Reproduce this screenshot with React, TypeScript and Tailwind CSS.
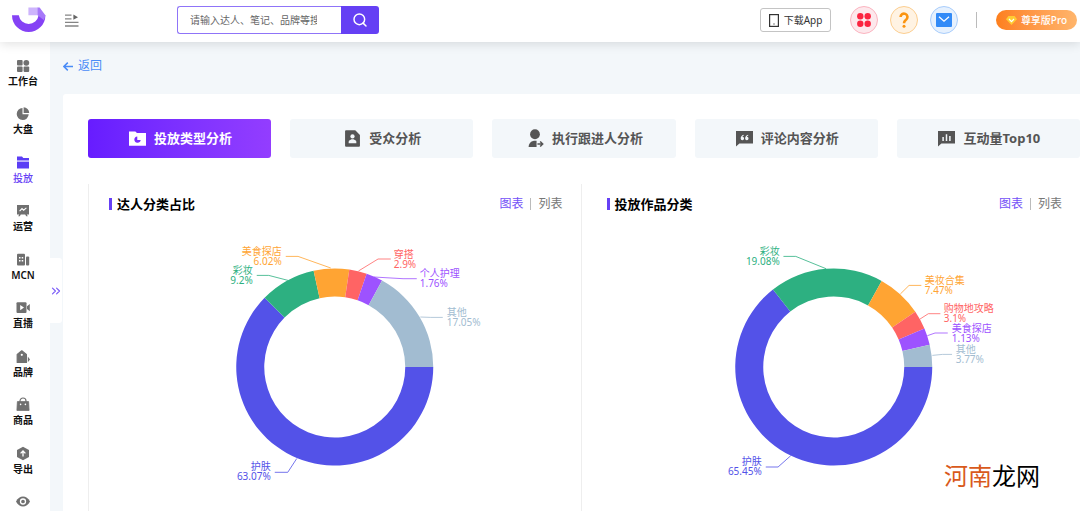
/**
 * Campaign analysis page: top bar, icon sidebar and two category donuts.
 */
import type { ReactNode } from 'react';
import { useState } from 'react';
import { ChevronsRight, Search } from 'lucide-react';

type Slice = {
  name: string;
  pct: string;
  color: string;
  // clockwise end angle in degrees, 0 = 3 o'clock
  end: number;
  side: 'left' | 'right';
  // label anchor and leader line, relative to the donut centre
  x: number;
  y: number;
  line: string;
};

const TALENT: Slice[] = [
  { name: '护肤', pct: '63.07%', color: '#5352e8', end: 224.6, side: 'left', x: -64, y: 105, line: '-60,105.3 -47,105.3 -38,91.5' },
  { name: '彩妆', pct: '9.2%', color: '#2db081', end: 257.6, side: 'left', x: -82, y: -91, line: '-78,-91.6 -66,-91.6 -46.7,-86.6' },
  { name: '美食探店', pct: '6.02%', color: '#ffa433', end: 278.5, side: 'left', x: -53, y: -110, line: '-49,-110.6 -36.7,-110.6 -4,-99' },
  { name: '穿搭', pct: '2.9%', color: '#ff6464', end: 288.9, side: 'right', x: 59, y: -107, line: '56,-108 43.3,-108 23.7,-96' },
  { name: '个人护理', pct: '1.76%', color: '#9d52ff', end: 298.7, side: 'right', x: 85, y: -88, line: '82,-88.3 68.3,-88.3 39,-90' },
  { name: '其他', pct: '17.05%', color: '#a2bcd1', end: 360, side: 'right', x: 112, y: -49, line: '108,-49.6 96,-49.6 85.6,-50' },
];

const WORKS: Slice[] = [
  { name: '护肤', pct: '65.45%', color: '#5352e8', end: 231.9, side: 'left', x: -72, y: 100, line: '-68,100 -55.7,100 -43,88.7' },
  { name: '彩妆', pct: '19.08%', color: '#2db081', end: 299.1, side: 'left', x: -54, y: -110, line: '-50.3,-110.6 -38,-110.6 -7.7,-98.3' },
  { name: '美妆合集', pct: '7.47%', color: '#ffa433', end: 325.9, side: 'right', x: 91, y: -81, line: '87.6,-81.6 75.3,-81.6 66.6,-73' },
  { name: '购物地攻略', pct: '3.1%', color: '#ff6464', end: 337, side: 'right', x: 110, y: -53, line: '106.6,-53.3 94.6,-53.3 86.3,-48' },
  { name: '美食探店', pct: '1.13%', color: '#9d52ff', end: 346.9, side: 'right', x: 118, y: -33, line: '114,-34 101.3,-34 93.6,-31.3' },
  { name: '其他', pct: '3.77%', color: '#a2bcd1', end: 360, side: 'right', x: 122, y: -12, line: '118.3,-12.6 108.6,-12.6 98.6,-11.6' },
];

const NAV: { label: string; icon: ReactNode }[] = [
  {
    label: '工作台',
    icon: (
      <>
        <rect x="1" y="2" width="5.6" height="5.6" rx="1" />
        <circle cx="10.3" cy="4.8" r="2.9" />
        <rect x="1" y="8.4" width="5.6" height="5.6" rx="1" />
        <rect x="7.6" y="8.4" width="5.6" height="5.6" rx="1" />
      </>
    ),
  },
  {
    label: '大盘',
    icon: (
      <>
        <path d="M6.5 2a6 6 0 1 0 6.2 6.3H6.5z" />
        <path d="M7.6 1.2a6 6 0 0 1 5.6 5.9H7.6z" />
      </>
    ),
  },
  {
    label: '投放',
    icon: (
      <>
        <path d="M1 1.6h5l1.3 1.3H13v2.6H1z" />
        <path d="M1 6.6h12v6.9H1z" />
      </>
    ),
  },
  {
    label: '运营',
    icon: (
      <>
        <path d="M1 2h12v9.4h-2.2l1 1.8h-1.6l-1-1.8H4.8l-1 1.8H2.2l1-1.8H1z" />
        <path d="M3.6 8.2 6 5.6l1.6 1.6 2.8-2.4" fill="none" stroke="#fff" strokeWidth="1.1" />
      </>
    ),
  },
  {
    label: 'MCN',
    icon: (
      <>
        <rect x="1" y="1.8" width="8" height="11.6" rx="1" />
        <rect x="10" y="4.6" width="3.2" height="8.8" rx="1" />
        <path d="M3 5h1.5v1.5H3zM5.7 5h1.5v1.5H5.7zM3 8h1.5v1.5H3zM5.7 8h1.5v1.5H5.7z" fill="#fff" />
      </>
    ),
  },
  {
    label: '直播',
    icon: (
      <>
        <rect x="0.5" y="2.2" width="10" height="10.8" rx="1" />
        <path d="M11 6.2 13.8 4v7.2L11 9z" />
        <path d="m4.2 5 3.8 2.6-3.8 2.6z" fill="#fff" />
      </>
    ),
  },
  {
    label: '品牌',
    icon: (
      <>
        <path d="M5.8 1.8 10.4 5.4v8H1.200v-8z" strokeLinejoin="round" stroke="currentColor" strokeWidth="1.2" />
        <path d="m11.8 7.4 2.2 3.200-2.2 2.600z" />
        <circle cx="5.8" cy="5.8" r="1.1" fill="#fff" />
      </>
    ),
  },
  {
    label: '商品',
    icon: (
      <>
        <path d="M1.4 4.6h11.2l.5 8.8H.9z" strokeLinejoin="round" stroke="currentColor" strokeWidth="0.8" />
        <path d="M4 5V4a3 3 0 0 1 6 0v1" fill="none" stroke="currentColor" strokeWidth="1.2" />
        <circle cx="4.6" cy="7.4" r="0.8" fill="#fff" />
        <circle cx="9.4" cy="7.4" r="0.8" fill="#fff" />
      </>
    ),
  },
  {
    label: '导出',
    icon: (
      <>
        <path d="m7 .8 6 3.3v6.8l-6 3.3-6-3.3V4.1z" />
        <path d="M7 10.6V5.4M4.6 7.4 7 5l2.4 2.4" fill="none" stroke="#fff" strokeWidth="1.3" />
      </>
    ),
  },
  {
    label: '',
    icon: (
      <>
        <path d="M0 7.5C3.4.9 10.6.9 14 7.5 10.6 14.1 3.4 14.1 0 7.5z" />
        <circle cx="7" cy="7.5" r="2.5" fill="none" stroke="#fff" strokeWidth="1.3" />
      </>
    ),
  },
];

const TABS: { label: string; icon: ReactNode }[] = [
  {
    label: '投放类型分析',
    icon: (
      <>
        <path d="M0 1.4h6l1.5 1.5H16v12H0z" fill="currentColor" />
        <path d="M7.8 6a3 3 0 1 0 3.2 3.4H7.8z" fill="#7a2bff" />
      </>
    ),
  },
  {
    label: '受众分析',
    icon: (
      <>
        <path d="M1 1.2Q1 .2 2 .2h8.6L15 4.6v10.2q0 1-1 1H2q-1 0-1-1z" fill="currentColor" />
        <circle cx="8" cy="6" r="2" fill="#f3f7fa" />
        <path d="M4.4 12.4V11q0-1 1-1.4l1.6-.8h2l1.6.8q1 .4 1 1.4v1.4z" fill="#f3f7fa" />
      </>
    ),
  },
  {
    label: '执行跟进人分析',
    icon: (
      <>
        <circle cx="7.5" cy="4" r="4.6" fill="currentColor" />
        <path d="M1.500 16q0-5 5-6h2.500v6z" fill="currentColor" />
        <path d="M9.8 13.2h5M12.4 10.8l2.4 2.4-2.4 2.4" fill="none" stroke="currentColor" strokeWidth="1.4" />
      </>
    ),
  },
  {
    label: '评论内容分析',
    icon: (
      <>
        <path d="M0 1h16v11.6H3.2L0 15.6z" fill="currentColor" />
        <path
          d="M7.2 4.4Q4.4 5.2 4.4 8a1.6 1.6 0 1 0 1.7-1.6q.1-.8 1.3-1.3zM11.4 4.4Q8.6 5.2 8.6 8a1.6 1.6 0 1 0 1.7-1.6q.1-.8 1.3-1.3z"
          fill="#f3f7fa"
        />
      </>
    ),
  },
  {
    label: '互动量Top10',
    icon: (
      <>
        <path d="M0 1h16v11.6H3.2L0 15.6z" fill="currentColor" />
        <path d="M4.8 6.6v3.8M8 4v6.4M11.2 5.6v4.8" stroke="#f3f7fa" strokeWidth="1.4" />
      </>
    ),
  },
];

const OUTER = 98.5;
const INNER = 70.5;

function point(r: number, deg: number) {
  const a = (deg * Math.PI) / 180;
  return `${(r * Math.cos(a)).toFixed(2)} ${(r * Math.sin(a)).toFixed(2)}`;
}

function arcPath(start: number, end: number) {
  const large = end - start > 180 ? 1 : 0;
  return `M${point(OUTER, start)}A${OUTER} ${OUTER} 0 ${large} 1 ${point(OUTER, end)}L${point(INNER, end)}A${INNER} ${INNER} 0 ${large} 0 ${point(INNER, start)}Z`;
}

function Donut({ slices, title }: { slices: Slice[]; title: string }) {
  return (
    <svg viewBox="-200 -140 400 280" className="block h-[280px] w-full overflow-visible" role="img" aria-label={title}>
      {slices.map((s, i) => (
        <g key={s.name}>
          <path d={arcPath(i === 0 ? 0 : slices[i - 1].end, s.end)} fill={s.color} />
          <polyline points={s.line} fill="none" stroke={s.color} strokeWidth="1" opacity="0.8" />
          <text textAnchor={s.side === 'left' ? 'end' : 'start'} fill={s.color} className="text-[10px]">
            <tspan x={s.x} y={s.y - 2}>{s.name}</tspan>
            <tspan x={s.x} y={s.y + 8}>{s.pct}</tspan>
          </text>
        </g>
      ))}
    </svg>
  );
}

function ChartPanel({ title, slices, className }: { title: string; slices: Slice[]; className?: string }) {
  const [view, setView] = useState<'chart' | 'list'>('chart');
  return (
    <section className={`px-5 pt-2.5 ${className ?? ''}`}>
      <div className="-mr-0.5 flex h-5 items-center justify-between">
        <h2 className="flex items-center gap-[5px] text-[13px] leading-5 font-bold text-black">
          <span className="h-3 w-[3px] bg-[#6640f5]" />
          {title}
        </h2>
        <div className="flex items-center text-[12px] leading-5">
          <button onClick={() => setView('chart')} className={view === 'chart' ? 'text-[#7350f7]' : 'text-[#777]'}>
            图表
          </button>
          <span className="mx-[7px] h-3 w-px bg-[#bbb]" />
          <button onClick={() => setView('list')} className={view === 'list' ? 'text-[#7350f7]' : 'text-[#777]'}>
            列表
          </button>
        </div>
      </div>
      <div className="pt-[13px]">
        {view === 'chart' ? (
          <Donut slices={slices} title={title} />
        ) : (
          <table className="w-full text-[12px]">
            <tbody>
              {slices.map((s) => (
                <tr key={s.name}>
                  <td>{s.name}</td>
                  <td className="text-right">{s.pct}</td>
                </tr>
              ))}
            </tbody>
          </table>
        )}
      </div>
    </section>
  );
}

function Header() {
  return (
    <header className="relative z-20 flex h-[42px] shrink-0 items-center bg-white pr-[3px] pb-0.5 pl-3 shadow-[0_2px_10px_rgba(0,0,0,0.12)]">
      <svg width="34" height="26" viewBox="0 0 34 26" aria-hidden="true">
        <path d="M0 8.300h6.800a10 10 0 0 0 19.800 0H33.400a16.700 16.700 0 0 1-33.400 0z" fill="#8542f5" />
        <path d="M16.400.6h9.800v7.600h-9.800z" fill="#cdb4fc" />
        <path d="M25.600.6h2L33.400 8.300l-1.400 5-6.400-5.100z" fill="#a678f9" />
      </svg>
      <button aria-label="收起菜单" className="ml-[19px]">
        <svg width="14" height="13" viewBox="0 0 14 13" fill="none" stroke="#858585" strokeWidth="1.3">
          <path d="M0 1.2h6.5M0 4.8h6.5M0 8.4h13.5M0 12h13.5" />
          <path d="M8.4.6 13 3.2 8.4 5.8z" fill="#666" stroke="none" />
        </svg>
      </button>
      <form className="ml-[98px] flex h-7 w-[202px]" onSubmit={(e) => e.preventDefault()}>
        <input
          type="text"
          aria-label="搜索"
          placeholder="请输入达人、笔记、品牌等搜索"
          className="min-w-0 flex-1 rounded-l-[3px] border border-r-0 border-[#8f74f8] pr-6 pl-3 text-[10px] outline-none placeholder:text-[#666]"
        />
        <button aria-label="搜索" className="flex w-[38px] items-center justify-center rounded-r-[3px] bg-[#6540f4] text-white">
          <Search size={16} strokeWidth={2.2} />
        </button>
      </form>
      <div className="ml-auto flex items-center">
        <button className="flex h-6 w-[71px] items-center justify-center gap-[5px] rounded-[3px] border border-[#c4c4c4] text-[10px] text-[#333]">
          <svg width="10" height="13" viewBox="0 0 10 13" fill="none" stroke="#333">
            <rect x="0.6" y="0.6" width="8.800" height="11.800" strokeWidth="1.2" />
            <path d="M4.400 10h1.200" strokeWidth="1.2" />
          </svg>
          下载App
        </button>
        <div className="ml-[19px] flex gap-3">
          <button aria-label="应用" className="flex size-7 items-center justify-center rounded-full border border-[#fbb4c0] bg-[#fde8ec]">
            <svg width="14" height="14" viewBox="0 0 14 14" fill="#fb2440">
              <circle cx="3.3" cy="3.3" r="3.2" />
              <circle cx="10.7" cy="3.3" r="3.2" />
              <circle cx="3.3" cy="10.7" r="3.2" />
              <circle cx="10.7" cy="10.7" r="3.2" />
            </svg>
          </button>
          <button aria-label="帮助" className="flex size-7 items-center justify-center rounded-full border border-[#fcce90] bg-[#fff3e3]">
            <svg width="10" height="16" viewBox="0 0 10 16" fill="none" stroke="#fb9410" strokeWidth="2.6">
              <path d="M1.6 5a3.400 3.400 0 1 1 5.800 2.400C6.2 8.500 5 9 5 11.200" />
              <circle cx="5" cy="14.200" r="1.500" fill="#fb9410" stroke="none" />
            </svg>
          </button>
          <button aria-label="消息" className="flex size-7 items-center justify-center rounded-full border border-[#a9cdfb] bg-[#e6f1fe]">
            <svg width="16" height="14" viewBox="0 0 16 14">
              <rect width="16" height="14" rx="1" fill="#338bf7" />
              <path d="m3 3.800 5 4.400 5-4.400" fill="none" stroke="#fff" strokeWidth="1.300" />
            </svg>
          </button>
        </div>
        <span className="ml-[18px] h-4 w-px bg-[#bbb]" />
        <button className="ml-[19px] flex h-5 w-[81px] items-center justify-center gap-1 rounded-full bg-linear-to-r from-[#fd7f1c] to-[#ffb56b] text-[10px] font-medium text-white">
          <svg width="11" height="9" viewBox="0 0 11 9">
            <path d="M2.400 0h6.200L11 3.200 5.500 9 0 3.200z" fill="#ffcc33" />
            <path d="m3 3 2.500 2.600L8 3" fill="none" stroke="#fff" strokeWidth="1.200" />
          </svg>
          尊享版Pro
        </button>
      </div>
    </header>
  );
}

function Sidebar() {
  return (
    <nav className="flex w-[50px] shrink-0 flex-col justify-between bg-white pt-4 pr-1 pb-0.5">
      {NAV.map((item) => (
        <a
          key={item.label}
          href="#"
          className={`flex flex-col items-center text-[10px] leading-4 ${
            item.label === '投放' ? 'font-medium text-[#6640f5]' : 'font-semibold text-[#111]'
          }`}
        >
          <svg
            width="14"
            height="15"
            viewBox="0 0 14 15"
            fill="currentColor"
            className={item.label === '投放' ? 'text-[#5b3df5]' : 'text-[#707070]'}
          >
            {item.icon}
          </svg>
          {item.label && <span>{item.label}</span>}
        </a>
      ))}
    </nav>
  );
}

export default function App() {
  const [tab, setTab] = useState(0);
  return (
    <div className="relative flex h-screen flex-col overflow-hidden bg-[#f3f7fa] font-['Noto_Sans','Noto_Sans_CJK_SC',sans-serif]">
      <Header />
      <div className="flex min-h-0 flex-1">
        <Sidebar />
        <main className="min-w-0 flex-1 overflow-hidden pl-[13px]">
          <a href="#" className="flex h-[52px] w-fit items-center gap-[5px] pb-1 text-[12px] text-[#4a8cf7]">
            <svg width="10" height="9" viewBox="0 0 10 9" fill="none" stroke="currentColor" strokeWidth="1.5">
              <path d="M10 4.500H1M4.800.6.900 4.500l3.900 3.900" />
            </svg>
            返回
          </a>
          <div className="min-h-full rounded-tl-[3px] bg-white pt-[25px] pl-[25px]">
            <div className="grid grid-cols-5 gap-[19px]">
              {TABS.map((t, i) => (
                <button
                  key={t.label}
                  onClick={() => setTab(i)}
                  className={`flex h-[39px] items-center justify-center gap-2 rounded-[3px] pl-0.5 text-[13px] font-bold ${
                    tab === i ? 'bg-linear-to-r from-[#671cff] to-[#933dff] text-white' : 'bg-[#f3f7fa] text-[#555]'
                  }`}
                >
                  <svg width="17" height="17" viewBox="0 0 16 16" className="overflow-visible">
                    {t.icon}
                  </svg>
                  {t.label}
                </button>
              ))}
            </div>
            <div className="mt-[26px] grid grid-cols-2 gap-[5px]">
              <ChartPanel title="达人分类占比" slices={TALENT} className="border-x border-[#eee] pb-10" />
              <ChartPanel title="投放作品分类" slices={WORKS} />
            </div>
          </div>
        </main>
      </div>
      <button
        aria-label="展开"
        className="absolute top-[258px] left-[50px] flex h-[65px] w-3 items-center justify-center rounded-r-[3px] bg-white text-[#7b5cf8]"
      >
        <ChevronsRight size={14} strokeWidth={2} className="shrink-0" />
      </button>
      <div className="absolute right-10 bottom-[17px] text-[24px] leading-9 text-black">
        <span className="text-[#d95a1c]">河南</span>龙网
      </div>
    </div>
  );
}
